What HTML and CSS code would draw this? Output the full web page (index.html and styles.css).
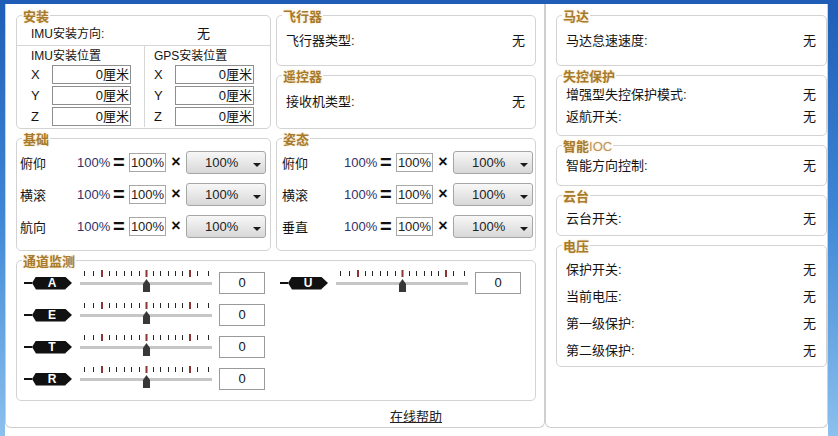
FILE: index.html
```html
<!DOCTYPE html>
<html lang="zh-CN">
<head>
    <meta charset="UTF-8">
    <meta name="viewport" content="width=device-width, initial-scale=1.0">
    <title>基础设置</title>
    <link rel="stylesheet" href="styles.css">
</head>
<body>

<!-- slider drawing, reused by every channel -->
<svg class="defs" width="0" height="0">
    <symbol id="slider" viewBox="0 0 132 32">
        <g fill="#262626">
            <rect x="4" y="4" width="1" height="5"/>
            <rect x="13" y="4" width="1" height="5"/>
            <rect x="29" y="4" width="1" height="5"/>
            <rect x="36" y="4" width="1" height="5"/>
            <rect x="44" y="4" width="1" height="5"/>
            <rect x="51" y="4" width="1" height="5"/>
            <rect x="59" y="4" width="1" height="5"/>
            <rect x="73" y="4" width="1" height="5"/>
            <rect x="80" y="4" width="1" height="5"/>
            <rect x="88" y="4" width="1" height="5"/>
            <rect x="95" y="4" width="1" height="5"/>
            <rect x="102" y="4" width="1" height="5"/>
            <rect x="117" y="4" width="1" height="5"/>
            <rect x="128" y="4" width="1" height="5"/>
        </g>
        <g fill="#8a3434">
            <rect x="21" y="3" width="2" height="7"/>
            <rect x="65.5" y="3" width="2" height="7"/>
            <rect x="109" y="3" width="2" height="7"/>
        </g>
        <rect x="0" y="15" width="132" height="3" fill="#c6c6c6"/>
        <polygon points="63,17 66.5,12 70,17 70,25 63,25" fill="#383838"/>
    </symbol>
</svg>

<div id="window">

    <!-- Panneau principal -->
    <div id="mainPanel">
        <div class="grid">

            <!-- 安装 -->
            <div class="group install">
                <div class="title">安装</div>
                <div class="install-top">
                    <span class="install-label">IMU安装方向:</span>
                    <span class="install-val">无</span>
                </div>
                <div class="install-pos">
                    <div class="pos-cell imu">
                        <div class="pos-head">IMU安装位置</div>
                        <div class="pos-row"><span>X</span><div class="num-box">0厘米</div></div>
                        <div class="pos-row"><span>Y</span><div class="num-box">0厘米</div></div>
                        <div class="pos-row"><span>Z</span><div class="num-box">0厘米</div></div>
                    </div>
                    <div class="pos-cell gps">
                        <div class="pos-head">GPS安装位置</div>
                        <div class="pos-row"><span>X</span><div class="num-box">0厘米</div></div>
                        <div class="pos-row"><span>Y</span><div class="num-box">0厘米</div></div>
                        <div class="pos-row"><span>Z</span><div class="num-box">0厘米</div></div>
                    </div>
                </div>
            </div>

            <div class="stack">
                <div class="group info aircraft">
                    <div class="title">飞行器</div>
                    <div class="rows">
                        <div class="row"><span>飞行器类型:</span><span>无</span></div>
                    </div>
                </div>
                <div class="group info remote">
                    <div class="title">遥控器</div>
                    <div class="rows">
                        <div class="row"><span>接收机类型:</span><span>无</span></div>
                    </div>
                </div>
            </div>

            <!-- 基础 -->
            <div class="group gain basic">
                <div class="title">基础</div>
                <div class="gain-row">
                    <span>俯仰</span><span class="pct">100%</span><span class="eq">=</span>
                    <div class="pct-box">100%</div><span class="times">×</span>
                    <div class="dropdown"><span>100%</span><i class="arrow"></i></div>
                </div>
                <div class="gain-row">
                    <span>横滚</span><span class="pct">100%</span><span class="eq">=</span>
                    <div class="pct-box">100%</div><span class="times">×</span>
                    <div class="dropdown"><span>100%</span><i class="arrow"></i></div>
                </div>
                <div class="gain-row">
                    <span>航向</span><span class="pct">100%</span><span class="eq">=</span>
                    <div class="pct-box">100%</div><span class="times">×</span>
                    <div class="dropdown"><span>100%</span><i class="arrow"></i></div>
                </div>
            </div>

            <!-- 姿态 -->
            <div class="group gain attitude">
                <div class="title">姿态</div>
                <div class="gain-row">
                    <span>俯仰</span><span class="pct">100%</span><span class="eq">=</span>
                    <div class="pct-box">100%</div><span class="times">×</span>
                    <div class="dropdown"><span>100%</span><i class="arrow"></i></div>
                </div>
                <div class="gain-row">
                    <span>横滚</span><span class="pct">100%</span><span class="eq">=</span>
                    <div class="pct-box">100%</div><span class="times">×</span>
                    <div class="dropdown"><span>100%</span><i class="arrow"></i></div>
                </div>
                <div class="gain-row">
                    <span>垂直</span><span class="pct">100%</span><span class="eq">=</span>
                    <div class="pct-box">100%</div><span class="times">×</span>
                    <div class="dropdown"><span>100%</span><i class="arrow"></i></div>
                </div>
            </div>

            <!-- 通道监测 -->
            <div class="group channels">
                <div class="title">通道监测</div>
                <div class="ch-grid">
                    <div class="ch-col">
                        <div class="ch-row">
                            <div class="tag"><span class="tag-body">A</span></div>
                            <svg class="slider"><use href="#slider"/></svg>
                            <div class="ch-val">0</div>
                        </div>
                        <div class="ch-row">
                            <div class="tag"><span class="tag-body">E</span></div>
                            <svg class="slider"><use href="#slider"/></svg>
                            <div class="ch-val">0</div>
                        </div>
                        <div class="ch-row">
                            <div class="tag"><span class="tag-body">T</span></div>
                            <svg class="slider"><use href="#slider"/></svg>
                            <div class="ch-val">0</div>
                        </div>
                        <div class="ch-row">
                            <div class="tag"><span class="tag-body">R</span></div>
                            <svg class="slider"><use href="#slider"/></svg>
                            <div class="ch-val">0</div>
                        </div>
                    </div>
                    <div class="ch-col">
                        <div class="ch-row">
                            <div class="tag"><span class="tag-body">U</span></div>
                            <svg class="slider"><use href="#slider"/></svg>
                            <div class="ch-val">0</div>
                        </div>
                    </div>
                </div>
            </div>
        </div>

        <div class="help"><a href="#">在线帮助</a></div>
    </div>

    <!-- Panneau droit -->
    <div id="sidePanel">
        <div class="group info motor">
            <div class="title">马达</div>
            <div class="rows">
                <div class="row"><span>马达怠速速度:</span><span>无</span></div>
            </div>
        </div>
        <div class="group info failsafe">
            <div class="title">失控保护</div>
            <div class="rows">
                <div class="row"><span>增强型失控保护模式:</span><span>无</span></div>
                <div class="row"><span>返航开关:</span><span>无</span></div>
            </div>
        </div>
        <div class="group info ioc">
            <div class="title">智能<span class="thin">IOC</span></div>
            <div class="rows">
                <div class="row"><span>智能方向控制:</span><span>无</span></div>
            </div>
        </div>
        <div class="group info gimbal">
            <div class="title">云台</div>
            <div class="rows">
                <div class="row"><span>云台开关:</span><span>无</span></div>
            </div>
        </div>
        <div class="group info voltage">
            <div class="title">电压</div>
            <div class="rows">
                <div class="row"><span>保护开关:</span><span>无</span></div>
                <div class="row"><span>当前电压:</span><span>无</span></div>
                <div class="row"><span>第一级保护:</span><span>无</span></div>
                <div class="row"><span>第二级保护:</span><span>无</span></div>
            </div>
        </div>
    </div>
</div>

</body>
</html>
```

FILE: styles.css
```css
body, html {
    margin: 0;
    padding: 0;
    height: 100%;
    overflow: hidden;
}

body {
    background: linear-gradient(180deg, #1f5db6 0%, #3f88d6 50%, #8cc0ee 100%);
    font-family: "Liberation Sans", "Noto Sans CJK SC", sans-serif;
    font-size: 13px;
    color: #141414;
}

.defs {
    position: absolute;
}

/* Fenetre */
#window {
    display: flex;
    margin: 4px 0 0 5px;
    width: 823px;
    height: 432px;
    background: #fff;
}

#mainPanel, #sidePanel {
    box-sizing: border-box;
    height: 424px;
    border: 1px solid #cfcfcf;
    border-top: none;
    border-radius: 0 0 6px 6px;
}

#mainPanel {
    width: 540px;
    padding: 11px 8px 0 10px;
}

#sidePanel {
    width: 283px;
    padding: 11px 0 0 10px;
    display: flex;
    flex-direction: column;
    gap: 9px;
}

.grid {
    display: grid;
    grid-template-columns: 255px 260px;
    grid-template-rows: 114px 113px 141px;
    column-gap: 5px;
    row-gap: 9px;
}

.stack {
    display: flex;
    flex-direction: column;
    gap: 9px;
}

/* Groupes */
.group {
    box-sizing: border-box;
    border: 1px solid #d3d3d3;
    border-radius: 5px;
    background: #fff;
}

.title {
    width: fit-content;
    margin: -5px 0 0 5px;
    padding: 0 1px;
    height: 12px;
    line-height: 12px;
    font-size: 13px;
    font-weight: bold;
    color: #a77a2c;
    background: #fff;
    text-shadow: 0 0 3px #f2ddb0;
}

.title .thin {
    font-weight: normal;
    color: #b8955a;
}

.rows {
    padding: 0 10px 0 9px;
}

.row {
    display: flex;
    justify-content: space-between;
    height: 22px;
    line-height: 22px;
}

.aircraft, .motor { height: 51px; }
.remote { height: 54px; }
.failsafe { height: 61px; }
.ioc, .gimbal { height: 41px; }
.voltage { height: 122px; }

.aircraft .rows, .motor .rows { padding-top: 7px; }
.remote .rows { padding-top: 8px; }
.failsafe .rows { padding-top: 1px; }
.ioc .rows { padding-top: 2px; }
.gimbal .rows { padding-top: 5px; }
.voltage .rows { padding-top: 3px; }

.voltage .row {
    height: 27px;
    line-height: 27px;
}

/* 安装 */
.install-top {
    display: grid;
    grid-template-columns: 128px 1fr;
    height: 22px;
    line-height: 22px;
    border-bottom: 1px solid #d6d6d6;
}

.install-label {
    padding-left: 14px;
    font-size: 12px;
}

.install-val {
    padding-left: 52px;
}

.install-pos {
    display: grid;
    grid-template-columns: 128px 1fr;
}

.pos-cell {
    padding-top: 2px;
}

.imu {
    padding-left: 14px;
    border-right: 1px solid #d6d6d6;
}

.gps {
    padding-left: 9px;
}

.pos-head {
    height: 16px;
    line-height: 16px;
    font-size: 12px;
}

.pos-row {
    display: grid;
    grid-template-columns: 21px 79px;
    align-items: center;
    height: 21px;
}

.num-box {
    box-sizing: border-box;
    height: 19px;
    line-height: 17px;
    border: 1px solid #8e8e8e;
    text-align: right;
    padding-right: 1px;
}

/* 基础 / 姿态 */
.gain-row {
    display: grid;
    grid-template-columns: 57px 36px 16px 37px 20px 80px;
    align-items: center;
    height: 32px;
    padding-left: 3px;
}

.attitude .gain-row {
    grid-template-columns: 62px 36px 16px 37px 20px 80px;
    padding-left: 5px;
}

.pct {
    color: #30306a;
}

.eq {
    font-family: "Liberation Sans", sans-serif;
    font-size: 20px;
    font-weight: bold;
    line-height: 20px;
    color: #111;
}

.pct-box {
    box-sizing: border-box;
    height: 19px;
    line-height: 17px;
    border: 1px solid #a8a8a8;
    text-align: center;
    color: #222;
}

.times {
    text-align: center;
    font-family: "Liberation Sans", sans-serif;
    font-size: 16px;
    font-weight: bold;
    color: #111;
}

.dropdown {
    box-sizing: border-box;
    height: 23px;
    display: flex;
    align-items: center;
    padding: 0 4px 0 18px;
    border: 1px solid #a6a6a6;
    border-radius: 3px;
    background: linear-gradient(#f7f7f7, #d8d8d8);
    color: #222;
}

.arrow {
    margin-left: auto;
    align-self: flex-end;
    margin-bottom: 6px;
    width: 0;
    height: 0;
    border-left: 4px solid transparent;
    border-right: 4px solid transparent;
    border-top: 4px solid #1a1a1a;
}

/* 通道监测 */
.channels {
    grid-column: 1 / 3;
}

.ch-grid {
    display: grid;
    grid-template-columns: 241px 241px;
    column-gap: 15px;
    margin-top: -1px;
    padding-left: 7px;
}

.ch-row {
    display: flex;
    align-items: center;
    height: 32px;
}

.tag {
    display: flex;
    align-items: center;
    width: 48px;
}

.tag::before {
    content: "";
    width: 8px;
    height: 2px;
    background: #111;
}

.tag-body {
    width: 40px;
    height: 13px;
    line-height: 13px;
    background: #111;
    color: #fff;
    font-size: 12px;
    font-weight: bold;
    text-align: center;
    clip-path: polygon(4px 0, calc(100% - 7px) 0, 100% 50%, calc(100% - 7px) 100%, 4px 100%, 0 50%);
}

.slider {
    width: 132px;
    height: 32px;
    margin-left: 8px;
}

.ch-val {
    box-sizing: border-box;
    width: 46px;
    height: 22px;
    line-height: 20px;
    margin: 0 0 1px 7px;
    border: 1px solid #9a9a9a;
    text-align: center;
}

/* Lien d'aide */
.help {
    margin-top: 8px;
    padding-left: 374px;
    line-height: 16px;
}

.help a {
    color: #222;
    text-decoration: underline;
}
```
